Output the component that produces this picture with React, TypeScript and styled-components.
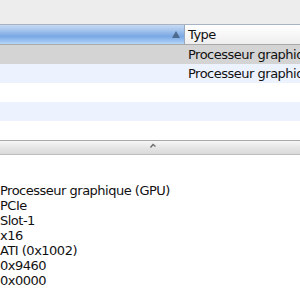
import React from "react";
import styled, { createGlobalStyle } from "styled-components";

const Global = createGlobalStyle`
  html, body { margin: 0; padding: 0; background: #ffffff; }
  body { width: 300px; height: 300px; overflow: hidden; font-family: "DejaVu Sans", "Liberation Sans", sans-serif; }
`;

const Page = styled.div`
  width: 300px;
  height: 300px;
  display: flex;
  flex-direction: column;
  overflow: hidden;
`;

const TopBand = styled.div`
  height: 24px;
  background: #ededed;
`;

const Table = styled.div`
  display: flex;
  flex-direction: column;
`;

const HeaderRow = styled.div`
  display: grid;
  grid-template-columns: 185px 1fr;
  height: 19px;
  border-top: 1px solid #a7b3c4;
  border-bottom: 1px solid #a9a9a9;
`;

const HeaderCell = styled.div<{ $sorted?: boolean }>`
  display: flex;
  align-items: center;
  justify-content: ${(p) => (p.$sorted ? "flex-end" : "flex-start")};
  padding: ${(p) => (p.$sorted ? "0 4px 0 0" : "0 0 0 3px")};
  border-right: ${(p) => (p.$sorted ? "1px solid #9aa9bd" : "none")};
  background: ${(p) =>
    p.$sorted
      ? "linear-gradient(to bottom, #c5d9f1 0%, #a8c7ee 25%, #86b0e6 50%, #7ba9e4 60%, #9cc3f1 85%, #b9d7f8 100%)"
      : "linear-gradient(to bottom, #ffffff 0%, #f7f7f7 50%, #eeeeee 100%)"};
  font-size: 13px;
  letter-spacing: -0.5px;
  color: #111;
  overflow: hidden;
  white-space: nowrap;
`;

const SortArrow = styled.span`
  width: 0;
  height: 0;
  border-left: 4px solid transparent;
  border-right: 4px solid transparent;
  border-bottom: 7px solid #4d6a8f;
`;

const Row = styled.div<{ $bg: string }>`
  display: grid;
  grid-template-columns: 186px 1fr;
  height: 19px;
  background: ${(p) => p.$bg};
  align-items: center;
`;

const Cell = styled.div`
  padding-left: 2px;
  font-size: 13px;
  letter-spacing: -0.5px;
  color: #111;
  white-space: nowrap;
  overflow: hidden;
`;

const Splitter = styled.div`
  height: 13px;
  border-top: 1px solid #a9a9a9;
  border-bottom: 1px solid #bdbdbd;
  background: linear-gradient(to bottom, #f6f6f6 0%, #e6e6e6 50%, #dadada 100%);
  display: flex;
  justify-content: center;
  align-items: flex-start;
`;

const Grip = styled.svg`
  margin: 2px 0 0 6px;
`;

const Details = styled.div`
  padding: 28px 0 0 0;
  display: flex;
  flex-direction: column;
`;

const DetailLine = styled.div`
  font-size: 13px;
  letter-spacing: -0.5px;
  line-height: 15px;
  color: #111;
  white-space: nowrap;
`;

const rows = [
  { bg: "#d4d4d4", text: "Processeur graphique (GPU)" },
  { bg: "#edf3fe", text: "Processeur graphique (GPU)" },
  { bg: "#ffffff", text: "" },
  { bg: "#edf3fe", text: "" },
  { bg: "#ffffff", text: "" },
];

const details = [
  "Processeur graphique (GPU)",
  "PCIe",
  "Slot-1",
  "x16",
  "ATI (0x1002)",
  "0x9460",
  "0x0000",
];

export default function App() {
  return (
    <Page>
      <Global />
      <TopBand />
      <Table>
        <HeaderRow>
          <HeaderCell $sorted>
            <SortArrow />
          </HeaderCell>
          <HeaderCell>Type</HeaderCell>
        </HeaderRow>
        {rows.map((r, i) => (
          <Row key={i} $bg={r.bg}>
            <Cell />
            <Cell>{r.text}</Cell>
          </Row>
        ))}
      </Table>
      <Splitter>
        <Grip width="6" height="5" viewBox="0 0 6 5">
          <path d="M0.5 4.5 L3 1.5 L5.5 3.5" fill="none" stroke="#6d6d6d" strokeWidth="1.4" />
        </Grip>
      </Splitter>
      <Details>
        {details.map((d) => (
          <DetailLine key={d}>{d}</DetailLine>
        ))}
      </Details>
    </Page>
  );
}
